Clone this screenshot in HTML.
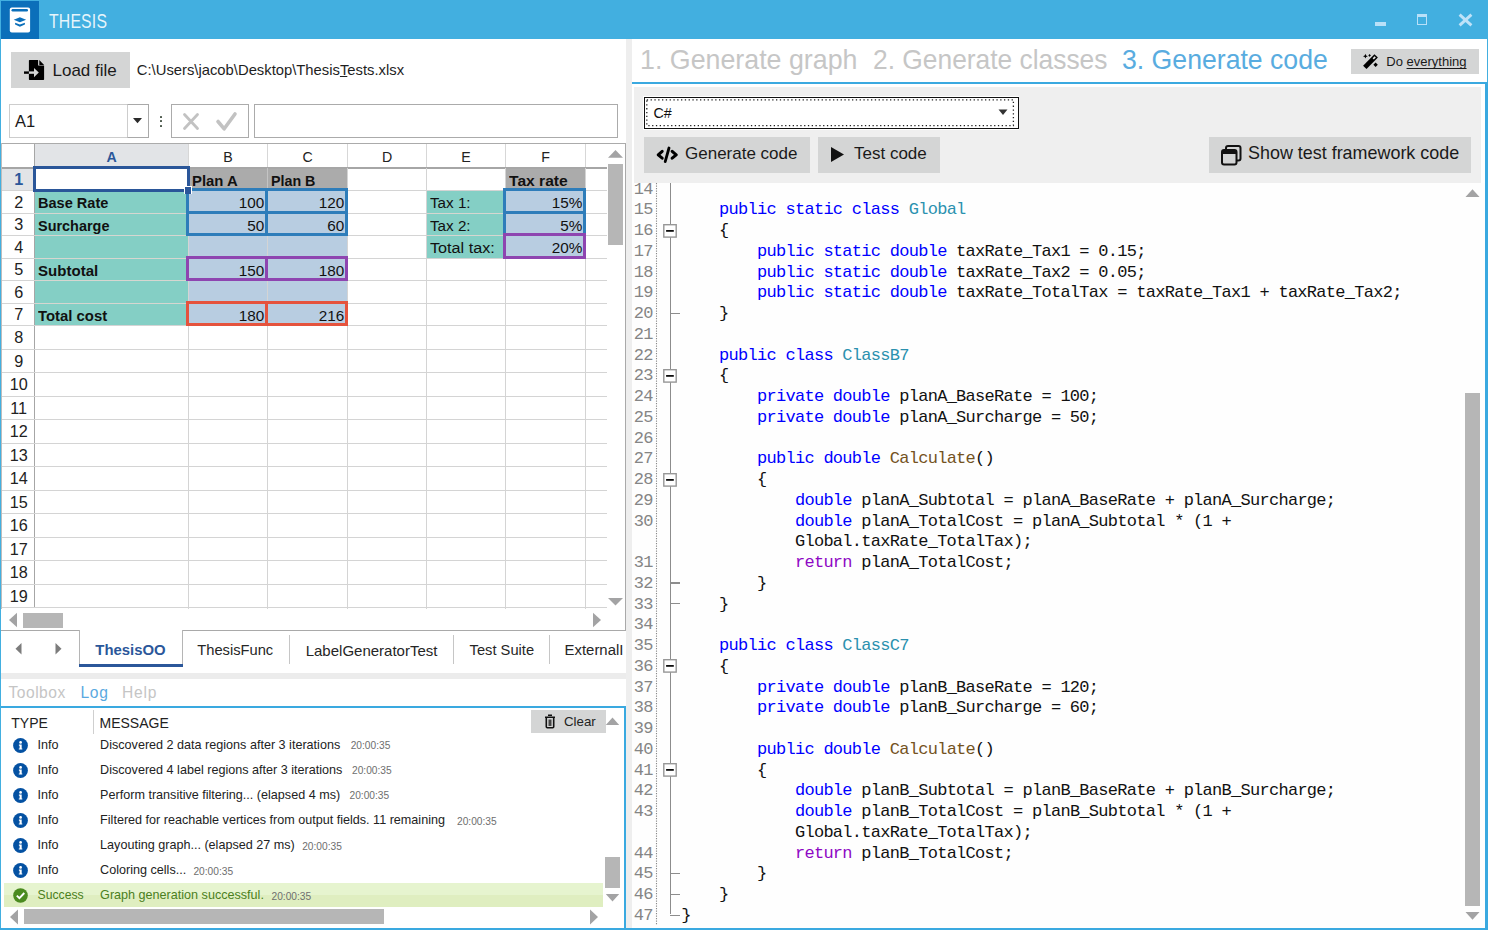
<!DOCTYPE html><html><head><meta charset="utf-8"><style>
*{margin:0;padding:0;box-sizing:content-box}
html,body{width:1488px;height:930px;overflow:hidden;background:#fff}
body{position:relative;font-family:"Liberation Sans", sans-serif}
body div, body svg{position:absolute}
.t{white-space:pre;line-height:1}
.code{font-family:"Liberation Mono", monospace;font-size:17px;letter-spacing:-0.722px;color:#111}
.ln{font-family:"Liberation Mono", monospace;font-size:17px;letter-spacing:-0.722px;color:#858585}
.k{color:#0000ff} .c{color:#2b91af} .m{color:#74531f} .r{color:#8f08c4}
u{text-decoration:underline}
</style></head><body><div style="left:0px;top:0px;width:1488px;height:39px;background:#42afe0"></div>
<div style="left:1px;top:1px;width:38px;height:37.5px;background:#0b6fba"></div>
<svg style="left:6px;top:4px" width="28" height="32" viewBox="0 0 28 32">
<rect x="3.8" y="3.6" width="20.3" height="25" rx="2" fill="#fff"/>
<rect x="5.5" y="5" width="16.5" height="2.4" rx="1.2" fill="#0b6fba"/>
<path d="M7.7 15.7 L13.9 13.2 L20.1 15.7 L13.9 18.2 Z" fill="#0b6fba"/>
<path d="M9.1 18.8 L13.9 20.4 L18.9 18.8 V20.6 L13.9 22.7 L9.1 20.6 Z" fill="#0b6fba"/>
</svg>
<div class="t" style="left:49.00px;top:11.86px;font-size:19.3px;color:rgba(255,255,255,0.88);transform:scaleX(0.82);transform-origin:0 0;letter-spacing:0.2px">THESIS</div>
<div style="left:1375px;top:22px;width:11px;height:4px;background:#b9e0f8"></div>
<div style="left:1417px;top:14px;width:8.2px;height:6.8px;border:1.4px solid #b9e0f8;border-top-width:3.6px"></div>
<svg style="left:1458px;top:13px" width="15" height="14" viewBox="0 0 15 14"><path d="M1.6 1.6 L13.4 12.4 M13.4 1.6 L1.6 12.4" stroke="#bfe2f8" stroke-width="2.9"/></svg>
<div style="left:0px;top:39px;width:1px;height:891px;background:#42afe0"></div>
<div style="left:1487px;top:39px;width:1px;height:891px;background:#42afe0"></div>
<div style="left:11px;top:52px;width:119px;height:36px;background:#d4d5d5"></div>
<svg style="left:20px;top:56px" width="30" height="28" viewBox="0 0 30 28">
<path d="M9.6 3.9 H18.1 V9.6 H24.1 V23.3 a0.7 0.7 0 0 1 -0.7 0.7 H9.6 a0.7 0.7 0 0 1 -0.7 -0.7 V4.6 a0.7 0.7 0 0 1 0.7 -0.7 Z" fill="#000"/>
<path d="M19.3 3.9 V8.9 H24.1 Z" fill="#000"/>
<path d="M4 16.6 H9" stroke="#000" stroke-width="2.4"/>
<path d="M8.9 16.6 H15" stroke="#d4d5d5" stroke-width="2.4"/>
<path d="M14 12 L18.8 16.6 L14 21.2 Z" fill="#d4d5d5"/>
</svg>
<div class="t" style="left:52.50px;top:61.61px;font-size:17.0px;color:#1a1a1a">Load file</div>
<div class="t" style="left:136.8px;top:62.77px;font-size:14.8px;color:#1e1e1e">C:\Users\jacob\Desktop\Thesis<u style="text-decoration-thickness:1px;text-underline-offset:1px">T</u>ests.xlsx</div>
<div style="left:9px;top:104px;width:118px;height:32px;border:1px solid #cdcdcd;border-right:0;background:#fff"></div>
<div style="left:127px;top:104px;width:20px;height:32px;border:1px solid #a9a9a9;border-left-color:#cdcdcd;background:#fff"></div>
<div class="t" style="left:15.00px;top:113.33px;font-size:16.5px;color:#1a1a1a">A1</div>
<svg style="left:133px;top:118px" width="9" height="6" viewBox="0 0 9 6"><path d="M0 0 H9 L4.5 5.3 Z" fill="#2a2a2a"/></svg>
<div style="left:160px;top:116.0px;width:2px;height:2px;background:#4d5a4d;border-radius:0.5px"></div>
<div style="left:160px;top:120.4px;width:2px;height:2px;background:#4d5a4d;border-radius:0.5px"></div>
<div style="left:160px;top:124.7px;width:2px;height:2px;background:#4d5a4d;border-radius:0.5px"></div>
<div style="left:171px;top:104px;width:76px;height:32px;border:1px solid #ababab;background:#fff"></div>
<svg style="left:180px;top:110px" width="60" height="24" viewBox="0 0 60 24">
<path d="M4.5 4.5 L17.5 18.5 M17.5 4.5 L4.5 18.5" stroke="#c2c2c2" stroke-width="2.8" stroke-linecap="round"/>
<path d="M38 11.5 L44.2 18.8 L55 4" stroke="#c2c2c2" stroke-width="3.6" fill="none" stroke-linejoin="round" stroke-linecap="round"/>
</svg>
<div style="left:254px;top:104px;width:362px;height:32px;border:1px solid #ababab;background:#fff"></div>
<div style="left:1.5px;top:143.5px;width:605px;height:24.5px;background:#fff"></div>
<div style="left:34.5px;top:144px;width:154.0px;height:24px;background:#e2e4e7"></div>
<div style="left:1.5px;top:168px;width:33px;height:22.5px;background:#e2e4e7"></div>
<div style="left:188.5px;top:168px;width:159.0px;height:22.5px;background:#ababab"></div>
<div style="left:505.5px;top:168px;width:80.0px;height:22.5px;background:#ababab"></div>
<div style="left:34.5px;top:190.5px;width:154.0px;height:135.0px;background:#84cfc5"></div>
<div style="left:188.5px;top:190.5px;width:159.0px;height:135.0px;background:#b8cde1"></div>
<div style="left:426.5px;top:190.5px;width:79.0px;height:68.0px;background:#84cfc5"></div>
<div style="left:505.5px;top:190.5px;width:80.0px;height:68.0px;background:#b8cde1"></div>
<div style="left:1.5px;top:143px;width:624.5px;height:1px;background:#ababab"></div>
<div style="left:34.0px;top:144px;width:1px;height:24px;background:#d7d7d7"></div>
<div style="left:188.0px;top:144px;width:1px;height:24px;background:#d7d7d7"></div>
<div style="left:267.0px;top:144px;width:1px;height:24px;background:#d7d7d7"></div>
<div style="left:347.0px;top:144px;width:1px;height:24px;background:#d7d7d7"></div>
<div style="left:426.0px;top:144px;width:1px;height:24px;background:#d7d7d7"></div>
<div style="left:505.0px;top:144px;width:1px;height:24px;background:#d7d7d7"></div>
<div style="left:585.0px;top:144px;width:1px;height:24px;background:#d7d7d7"></div>
<div style="left:1.5px;top:167px;width:606px;height:1.6px;background:#a6a6a6"></div>
<div style="left:34px;top:144px;width:1.2px;height:464px;background:#a6a6a6"></div>
<div style="left:1.5px;top:190.0px;width:605px;height:1px;background:#d4d4d4"></div>
<div style="left:1.5px;top:213.0px;width:605px;height:1px;background:#d4d4d4"></div>
<div style="left:1.5px;top:235.0px;width:605px;height:1px;background:#d4d4d4"></div>
<div style="left:1.5px;top:258.0px;width:605px;height:1px;background:#d4d4d4"></div>
<div style="left:1.5px;top:280.0px;width:605px;height:1px;background:#d4d4d4"></div>
<div style="left:1.5px;top:303.0px;width:605px;height:1px;background:#d4d4d4"></div>
<div style="left:1.5px;top:325.0px;width:605px;height:1px;background:#d4d4d4"></div>
<div style="left:1.5px;top:349.0px;width:605px;height:1px;background:#d4d4d4"></div>
<div style="left:1.5px;top:372.0px;width:605px;height:1px;background:#d4d4d4"></div>
<div style="left:1.5px;top:396.0px;width:605px;height:1px;background:#d4d4d4"></div>
<div style="left:1.5px;top:419.0px;width:605px;height:1px;background:#d4d4d4"></div>
<div style="left:1.5px;top:443.0px;width:605px;height:1px;background:#d4d4d4"></div>
<div style="left:1.5px;top:466.0px;width:605px;height:1px;background:#d4d4d4"></div>
<div style="left:1.5px;top:490.0px;width:605px;height:1px;background:#d4d4d4"></div>
<div style="left:1.5px;top:513.0px;width:605px;height:1px;background:#d4d4d4"></div>
<div style="left:1.5px;top:537.0px;width:605px;height:1px;background:#d4d4d4"></div>
<div style="left:1.5px;top:560.0px;width:605px;height:1px;background:#d4d4d4"></div>
<div style="left:1.5px;top:584.0px;width:605px;height:1px;background:#d4d4d4"></div>
<div style="left:1.5px;top:607.0px;width:605px;height:1px;background:#d4d4d4"></div>
<div style="left:188.0px;top:168px;width:1px;height:441px;background:#d4d4d4"></div>
<div style="left:267.0px;top:168px;width:1px;height:441px;background:#d4d4d4"></div>
<div style="left:347.0px;top:168px;width:1px;height:441px;background:#d4d4d4"></div>
<div style="left:426.0px;top:168px;width:1px;height:441px;background:#d4d4d4"></div>
<div style="left:505.0px;top:168px;width:1px;height:441px;background:#d4d4d4"></div>
<div style="left:585.0px;top:168px;width:1px;height:441px;background:#d4d4d4"></div>
<div style="left:34.5px;top:213.0px;width:154.0px;height:1px;background:#d6d6d0"></div>
<div style="left:34.5px;top:235.0px;width:154.0px;height:1px;background:#d6d6d0"></div>
<div style="left:34.5px;top:258.0px;width:154.0px;height:1px;background:#d6d6d0"></div>
<div style="left:34.5px;top:280.0px;width:154.0px;height:1px;background:#d6d6d0"></div>
<div style="left:34.5px;top:303.0px;width:154.0px;height:1px;background:#d6d6d0"></div>
<div style="left:188.5px;top:213.0px;width:159.0px;height:1px;background:#d2d8de"></div>
<div style="left:188.5px;top:235.0px;width:159.0px;height:1px;background:#d2d8de"></div>
<div style="left:188.5px;top:258.0px;width:159.0px;height:1px;background:#d2d8de"></div>
<div style="left:188.5px;top:280.0px;width:159.0px;height:1px;background:#d2d8de"></div>
<div style="left:188.5px;top:303.0px;width:159.0px;height:1px;background:#d2d8de"></div>
<div style="left:426.5px;top:213.0px;width:79.0px;height:1px;background:#d6d6d0"></div>
<div style="left:426.5px;top:235.0px;width:79.0px;height:1px;background:#d6d6d0"></div>
<div style="left:267.0px;top:168px;width:1px;height:22.5px;background:#c4c4c4"></div>
<div style="left:1px;top:143px;width:1px;height:466px;background:#bdbdbd"></div>
<div class="t" style="left:-188.50px;width:600px;text-align:center;top:149.58px;font-size:14.2px;color:#2b579a;font-weight:bold">A</div>
<div class="t" style="left:-72.00px;width:600px;text-align:center;top:149.58px;font-size:14.2px;color:#222">B</div>
<div class="t" style="left:7.50px;width:600px;text-align:center;top:149.58px;font-size:14.2px;color:#222">C</div>
<div class="t" style="left:87.00px;width:600px;text-align:center;top:149.58px;font-size:14.2px;color:#222">D</div>
<div class="t" style="left:166.00px;width:600px;text-align:center;top:149.58px;font-size:14.2px;color:#222">E</div>
<div class="t" style="left:245.50px;width:600px;text-align:center;top:149.58px;font-size:14.2px;color:#222">F</div>
<div class="t" style="left:-281.30px;width:600px;text-align:center;top:170.84px;font-size:16.2px;color:#2b579a;font-weight:bold">1</div>
<div class="t" style="left:-281.30px;width:600px;text-align:center;top:193.59px;font-size:16.2px;color:#222">2</div>
<div class="t" style="left:-281.30px;width:600px;text-align:center;top:216.09px;font-size:16.2px;color:#222">3</div>
<div class="t" style="left:-281.30px;width:600px;text-align:center;top:238.59px;font-size:16.2px;color:#222">4</div>
<div class="t" style="left:-281.30px;width:600px;text-align:center;top:261.09px;font-size:16.2px;color:#222">5</div>
<div class="t" style="left:-281.30px;width:600px;text-align:center;top:283.59px;font-size:16.2px;color:#222">6</div>
<div class="t" style="left:-281.30px;width:600px;text-align:center;top:306.09px;font-size:16.2px;color:#222">7</div>
<div class="t" style="left:-281.30px;width:600px;text-align:center;top:329.09px;font-size:16.2px;color:#222">8</div>
<div class="t" style="left:-281.30px;width:600px;text-align:center;top:352.59px;font-size:16.2px;color:#222">9</div>
<div class="t" style="left:-281.30px;width:600px;text-align:center;top:376.09px;font-size:16.2px;color:#222">10</div>
<div class="t" style="left:-281.30px;width:600px;text-align:center;top:399.59px;font-size:16.2px;color:#222">11</div>
<div class="t" style="left:-281.30px;width:600px;text-align:center;top:423.09px;font-size:16.2px;color:#222">12</div>
<div class="t" style="left:-281.30px;width:600px;text-align:center;top:446.59px;font-size:16.2px;color:#222">13</div>
<div class="t" style="left:-281.30px;width:600px;text-align:center;top:470.09px;font-size:16.2px;color:#222">14</div>
<div class="t" style="left:-281.30px;width:600px;text-align:center;top:493.59px;font-size:16.2px;color:#222">15</div>
<div class="t" style="left:-281.30px;width:600px;text-align:center;top:517.09px;font-size:16.2px;color:#222">16</div>
<div class="t" style="left:-281.30px;width:600px;text-align:center;top:540.59px;font-size:16.2px;color:#222">17</div>
<div class="t" style="left:-281.30px;width:600px;text-align:center;top:564.09px;font-size:16.2px;color:#222">18</div>
<div class="t" style="left:-281.30px;width:600px;text-align:center;top:587.59px;font-size:16.2px;color:#222">19</div>
<div class="t" style="left:191.90px;top:172.55px;font-size:15px;color:#111;font-weight:bold;transform:scaleX(0.9908);transform-origin:0 0;">Plan A</div>
<div class="t" style="left:270.90px;top:172.55px;font-size:15px;color:#111;font-weight:bold;transform:scaleX(0.9518);transform-origin:0 0;">Plan B</div>
<div class="t" style="left:508.90px;top:172.55px;font-size:15px;color:#111;font-weight:bold;transform:scaleX(1.0408);transform-origin:0 0;">Tax rate</div>
<div class="t" style="left:37.90px;top:195.30px;font-size:15px;color:#111;font-weight:bold;transform:scaleX(0.9693);transform-origin:0 0;">Base Rate</div>
<div class="t" style="left:37.90px;top:217.80px;font-size:15px;color:#111;font-weight:bold;transform:scaleX(0.9626);transform-origin:0 0;">Surcharge</div>
<div class="t" style="left:37.90px;top:262.80px;font-size:15px;color:#111;font-weight:bold;transform:scaleX(1.0033);transform-origin:0 0;">Subtotal</div>
<div class="t" style="left:37.90px;top:307.80px;font-size:15px;color:#111;font-weight:bold;transform:scaleX(0.9921);transform-origin:0 0;">Total cost</div>
<div class="t" style="right:1223.70px;top:195.05px;font-size:15.3px;color:#111;">100</div>
<div class="t" style="right:1143.70px;top:195.05px;font-size:15.3px;color:#111;">120</div>
<div class="t" style="right:1223.70px;top:217.55px;font-size:15.3px;color:#111;">50</div>
<div class="t" style="right:1143.70px;top:217.55px;font-size:15.3px;color:#111;">60</div>
<div class="t" style="right:1223.70px;top:262.55px;font-size:15.3px;color:#111;">150</div>
<div class="t" style="right:1143.70px;top:262.55px;font-size:15.3px;color:#111;">180</div>
<div class="t" style="right:1223.70px;top:307.55px;font-size:15.3px;color:#111;">180</div>
<div class="t" style="right:1143.70px;top:307.55px;font-size:15.3px;color:#111;">216</div>
<div class="t" style="right:905.70px;top:195.05px;font-size:15.3px;color:#111;">15%</div>
<div class="t" style="right:905.70px;top:217.55px;font-size:15.3px;color:#111;">5%</div>
<div class="t" style="right:905.70px;top:240.05px;font-size:15.3px;color:#111;">20%</div>
<div class="t" style="left:429.90px;top:195.05px;font-size:15.3px;color:#111;transform:scaleX(0.9939);transform-origin:0 0;">Tax 1:</div>
<div class="t" style="left:429.90px;top:217.55px;font-size:15.3px;color:#111;transform:scaleX(0.9939);transform-origin:0 0;">Tax 2:</div>
<div class="t" style="left:429.90px;top:240.05px;font-size:15.3px;color:#111;transform:scaleX(1.0588);transform-origin:0 0;">Total tax:</div>
<div style="left:186.10px;top:187.80px;width:76.40px;height:20.70px;border:3px solid #2e7dba"></div>
<div style="left:186.10px;top:210.80px;width:76.40px;height:19.70px;border:3px solid #2e7dba"></div>
<div style="left:265.10px;top:187.80px;width:77.40px;height:20.70px;border:3px solid #2e7dba"></div>
<div style="left:265.10px;top:210.80px;width:77.40px;height:19.70px;border:3px solid #2e7dba"></div>
<div style="left:503.10px;top:187.80px;width:77.40px;height:20.70px;border:3px solid #2e7dba"></div>
<div style="left:503.10px;top:210.80px;width:77.40px;height:19.70px;border:3px solid #2e7dba"></div>
<div style="left:186.10px;top:255.80px;width:76.40px;height:19.70px;border:3px solid #8e45b0"></div>
<div style="left:265.10px;top:255.80px;width:77.40px;height:19.70px;border:3px solid #8e45b0"></div>
<div style="left:503.10px;top:232.80px;width:77.40px;height:20.70px;border:3px solid #8e45b0"></div>
<div style="left:186.10px;top:300.80px;width:76.40px;height:19.70px;border:3px solid #e5533d"></div>
<div style="left:265.10px;top:300.80px;width:77.40px;height:19.70px;border:3px solid #e5533d"></div>
<div style="left:33px;top:166.3px;width:150.7px;height:19.5px;border:3px solid #2a5699"></div>
<div style="left:184.5px;top:186.5px;width:6.5px;height:6.5px;background:#2a5699;outline:1px solid #fff"></div>
<div style="left:185px;top:187.2px;width:6px;height:6.4px;background:#2a5699"></div>
<div style="left:607px;top:144px;width:18px;height:486px;background:#fff"></div>
<svg style="left:607px;top:149px" width="17" height="10" viewBox="0 0 17 10"><path d="M1 8.8 L8.5 1 L16 8.8 Z" fill="#a3a3a4"/></svg>
<div style="left:608px;top:164px;width:15px;height:80.8px;background:#b6b6b6"></div>
<svg style="left:607px;top:596.5px" width="17" height="10" viewBox="0 0 17 10"><path d="M1 1 L8.5 8.5 L16 1 Z" fill="#a3a3a4"/></svg>
<div style="left:625px;top:143.5px;width:1px;height:487px;background:#a9a9a9"></div>
<svg style="left:8px;top:612px" width="10" height="16" viewBox="0 0 10 16"><path d="M9 0.8 L1 8 L9 15.2 Z" fill="#a3a3a4"/></svg>
<div style="left:23px;top:612.8px;width:40px;height:14.8px;background:#b6b6b6"></div>
<svg style="left:591.8px;top:612px" width="10" height="16" viewBox="0 0 10 16"><path d="M1 0.8 L9 8 L1 15.2 Z" fill="#a3a3a4"/></svg>
<div style="left:1px;top:630px;width:79px;height:1px;background:#a9a9a9"></div>
<div style="left:182px;top:630px;width:443px;height:1px;background:#a9a9a9"></div>
<div style="left:79.3px;top:630px;width:1px;height:34px;background:#b5b5b5"></div>
<div style="left:182px;top:630px;width:1px;height:34px;background:#b5b5b5"></div>
<div style="left:79px;top:664px;width:104px;height:3px;background:#2b579a"></div>
<svg style="left:14px;top:642px" width="9" height="14" viewBox="0 0 9 14"><path d="M7.5 1 L1.5 6.8 L7.5 12.6 Z" fill="#7c7c7c"/></svg>
<svg style="left:54px;top:642px" width="9" height="14" viewBox="0 0 9 14"><path d="M1.5 1 L7.5 6.8 L1.5 12.6 Z" fill="#7c7c7c"/></svg>
<div class="t" style="left:95.30px;top:642.89px;font-size:14.9px;color:#2b579a;font-weight:bold">ThesisOO</div>
<div class="t" style="left:197.30px;top:643.06px;font-size:14.7px;color:#262626">ThesisFunc</div>
<div style="left:288.5px;top:635.3px;width:1.3px;height:28.3px;background:#c6c6c6"></div>
<div class="t" style="left:305.70px;top:642.80px;font-size:15.0px;color:#262626">LabelGeneratorTest</div>
<div style="left:453px;top:635.3px;width:1.3px;height:28.3px;background:#c6c6c6"></div>
<div class="t" style="left:469.60px;top:643.06px;font-size:14.7px;color:#262626">Test Suite</div>
<div style="left:549.2px;top:635.3px;width:1.3px;height:28.3px;background:#c6c6c6"></div>
<div style="left:564.6px;top:642.69px;width:59px;overflow:hidden;height:22px;font-size:14.9px;color:#262626" class="t">ExternalI</div>
<div style="left:1px;top:673px;width:625px;height:6px;background:#ececec"></div>
<div class="t" style="left:8.50px;top:684.79px;font-size:15.6px;color:#c5c5c5;letter-spacing:0.5px">Toolbox</div>
<div class="t" style="left:80.50px;top:684.79px;font-size:15.6px;color:#5aa9e0;letter-spacing:0.7px">Log</div>
<div class="t" style="left:122.00px;top:684.79px;font-size:15.6px;color:#c5c5c5;letter-spacing:0.8px">Help</div>
<div style="left:1px;top:706px;width:625px;height:2px;background:#3aa9e0"></div>
<div style="left:624px;top:706px;width:2px;height:224px;background:#3aa9e0"></div>
<div class="t" style="left:11.30px;top:716.35px;font-size:14.0px;color:#222">TYPE</div>
<div style="left:93px;top:710px;width:1px;height:24px;background:#cfcfcf"></div>
<div class="t" style="left:99.50px;top:716.35px;font-size:14.0px;color:#222">MESSAGE</div>
<div style="left:531px;top:710px;width:75px;height:23px;background:#d4d5d5"></div>
<svg style="left:544px;top:714px" width="12" height="15" viewBox="0 0 12 15">
<path d="M4 1.2 H8 M1 3.2 H11" stroke="#111" stroke-width="1.6"/>
<path d="M2.3 3.5 V12.8 a1 1 0 0 0 1 1 H8.7 a1 1 0 0 0 1 -1 V3.5" stroke="#111" stroke-width="1.6" fill="none"/>
<rect x="4.5" y="5.5" width="3" height="6.5" fill="#444"/>
</svg>
<div class="t" style="left:564.00px;top:714.64px;font-size:13.3px;color:#222">Clear</div>
<svg style="left:605px;top:716px" width="15" height="10" viewBox="0 0 15 10"><path d="M0.8 9 L7.5 1.5 L14.2 9 Z" fill="#a3a3a4"/></svg>
<div style="left:4.2px;top:883px;width:599px;height:12px;background:#e6f4cf"></div>
<div style="left:4.2px;top:895px;width:599px;height:12px;background:#dfeec0"></div>
<svg style="left:12.90px;top:737.90px" width="15" height="15" viewBox="0 0 15 15"><circle cx="7.5" cy="7.5" r="7.4" fill="#0451a2"/><circle cx="7.6" cy="4.4" r="1.35" fill="#fff"/><path d="M5.9 6.6 H8.7 V10.4 H9.3 V11.6 H5.8 V10.4 H6.6 V7.8 H5.9 Z" fill="#fff"/></svg>
<div class="t" style="left:37.60px;top:738.83px;font-size:12.6px;color:#222">Info</div>
<div class="t" style="left:100.10px;top:738.83px;font-size:12.6px;color:#222">Discovered 2 data regions after 3 iterations</div>
<div class="t" style="left:350.70px;top:741.37px;font-size:10.2px;color:#6e6e6e">20:00:35</div>
<svg style="left:12.90px;top:762.95px" width="15" height="15" viewBox="0 0 15 15"><circle cx="7.5" cy="7.5" r="7.4" fill="#0451a2"/><circle cx="7.6" cy="4.4" r="1.35" fill="#fff"/><path d="M5.9 6.6 H8.7 V10.4 H9.3 V11.6 H5.8 V10.4 H6.6 V7.8 H5.9 Z" fill="#fff"/></svg>
<div class="t" style="left:37.60px;top:763.88px;font-size:12.6px;color:#222">Info</div>
<div class="t" style="left:100.10px;top:763.88px;font-size:12.6px;color:#222">Discovered 4 label regions after 3 iterations</div>
<div class="t" style="left:352.00px;top:766.42px;font-size:10.2px;color:#6e6e6e">20:00:35</div>
<svg style="left:12.90px;top:788.00px" width="15" height="15" viewBox="0 0 15 15"><circle cx="7.5" cy="7.5" r="7.4" fill="#0451a2"/><circle cx="7.6" cy="4.4" r="1.35" fill="#fff"/><path d="M5.9 6.6 H8.7 V10.4 H9.3 V11.6 H5.8 V10.4 H6.6 V7.8 H5.9 Z" fill="#fff"/></svg>
<div class="t" style="left:37.60px;top:788.93px;font-size:12.6px;color:#222">Info</div>
<div class="t" style="left:100.10px;top:788.93px;font-size:12.6px;color:#222">Perform transitive filtering... (elapsed 4 ms)</div>
<div class="t" style="left:349.50px;top:791.47px;font-size:10.2px;color:#6e6e6e">20:00:35</div>
<svg style="left:12.90px;top:813.05px" width="15" height="15" viewBox="0 0 15 15"><circle cx="7.5" cy="7.5" r="7.4" fill="#0451a2"/><circle cx="7.6" cy="4.4" r="1.35" fill="#fff"/><path d="M5.9 6.6 H8.7 V10.4 H9.3 V11.6 H5.8 V10.4 H6.6 V7.8 H5.9 Z" fill="#fff"/></svg>
<div class="t" style="left:37.60px;top:813.98px;font-size:12.6px;color:#222">Info</div>
<div class="t" style="left:100.10px;top:813.98px;font-size:12.6px;color:#222">Filtered for reachable vertices from output fields. 11 remaining</div>
<div class="t" style="left:457.00px;top:816.52px;font-size:10.2px;color:#6e6e6e">20:00:35</div>
<svg style="left:12.90px;top:838.10px" width="15" height="15" viewBox="0 0 15 15"><circle cx="7.5" cy="7.5" r="7.4" fill="#0451a2"/><circle cx="7.6" cy="4.4" r="1.35" fill="#fff"/><path d="M5.9 6.6 H8.7 V10.4 H9.3 V11.6 H5.8 V10.4 H6.6 V7.8 H5.9 Z" fill="#fff"/></svg>
<div class="t" style="left:37.60px;top:839.03px;font-size:12.6px;color:#222">Info</div>
<div class="t" style="left:100.10px;top:839.03px;font-size:12.6px;color:#222">Layouting graph... (elapsed 27 ms)</div>
<div class="t" style="left:302.20px;top:841.57px;font-size:10.2px;color:#6e6e6e">20:00:35</div>
<svg style="left:12.90px;top:863.15px" width="15" height="15" viewBox="0 0 15 15"><circle cx="7.5" cy="7.5" r="7.4" fill="#0451a2"/><circle cx="7.6" cy="4.4" r="1.35" fill="#fff"/><path d="M5.9 6.6 H8.7 V10.4 H9.3 V11.6 H5.8 V10.4 H6.6 V7.8 H5.9 Z" fill="#fff"/></svg>
<div class="t" style="left:37.60px;top:864.08px;font-size:12.6px;color:#222">Info</div>
<div class="t" style="left:100.10px;top:864.08px;font-size:12.6px;color:#222">Coloring cells...</div>
<div class="t" style="left:193.40px;top:866.62px;font-size:10.2px;color:#6e6e6e">20:00:35</div>
<svg style="left:13.00px;top:888.20px" width="15" height="15" viewBox="0 0 15 15"><circle cx="7.5" cy="7.5" r="7.3" fill="#4b8b1f"/><path d="M3.8 7.6 L6.4 10.2 L11.3 5" stroke="#fff" stroke-width="1.9" fill="none"/></svg>
<div class="t" style="left:37.60px;top:889.47px;font-size:12.2px;color:#4b7f20">Success</div>
<div class="t" style="left:100.10px;top:889.13px;font-size:12.6px;color:#4b7f20">Graph generation successful.</div>
<div class="t" style="left:271.50px;top:891.67px;font-size:10.2px;color:#6e6e6e">20:00:35</div>
<div style="left:605px;top:857px;width:15px;height:31px;background:#b6b6b6"></div>
<svg style="left:605px;top:893px" width="15" height="10" viewBox="0 0 15 10"><path d="M0.8 1 L7.5 8.5 L14.2 1 Z" fill="#a3a3a4"/></svg>
<svg style="left:9px;top:909px" width="10" height="16" viewBox="0 0 10 16"><path d="M9 0.5 L1 8 L9 15.5 Z" fill="#a3a3a4"/></svg>
<div style="left:24px;top:909px;width:360px;height:15px;background:#b6b6b6"></div>
<svg style="left:589px;top:909px" width="10" height="16" viewBox="0 0 10 16"><path d="M1 0.5 L9 8 L1 15.5 Z" fill="#a3a3a4"/></svg>
<div style="left:626px;top:39px;width:6px;height:891px;background:#eeeeee"></div>
<div class="t" style="left:640.40px;top:46.38px;font-size:27.2px;color:#c6c6c6;transform:scaleX(0.9855);transform-origin:0 0">1. Generate graph</div>
<div class="t" style="left:873.30px;top:46.38px;font-size:27.2px;color:#c6c6c6;transform:scaleX(0.9697);transform-origin:0 0">2. Generate classes</div>
<div class="t" style="left:1122.10px;top:46.38px;font-size:27.2px;color:#59ace0;transform:scaleX(0.9796);transform-origin:0 0">3. Generate code</div>
<div style="left:1351px;top:49px;width:128px;height:25px;background:#d4d5d5"></div>
<svg style="left:1356px;top:48px" width="30" height="26" viewBox="0 0 30 26">
<path d="M7.1 17.8 L18.4 6.3 L21.9 9.6 L10.5 21 Z" fill="#000"/>
<path d="M16.6 10.3 L18.6 8.2 L19.8 9.4 L17.8 11.5 Z" fill="#e8e8e8"/>
<path d="M9.4 5.8 Q9.6 8 11.8 8.2 Q9.6 8.4 9.4 10.6 Q9.2 8.4 7 8.2 Q9.2 8 9.4 5.8 Z" fill="#000"/>
<path d="M13.6 6.1 L14.9 7.4 L13.6 8.7 L12.3 7.4 Z" fill="#000"/>
<path d="M19.6 14.6 L21.8 16.8 L19.6 19 L17.4 16.8 Z" fill="#000"/>
</svg>
<div class="t" style="left:1386.3px;top:55.30px;font-size:13px;color:#1a1a1a">Do <u style="text-decoration-thickness:1px;text-underline-offset:1.5px">everything</u></div>
<div style="left:632px;top:82px;width:856px;height:2px;background:#3aa9e0"></div>
<div style="left:1485px;top:84px;width:3px;height:846px;background:#3aa9e0"></div>
<div style="left:0px;top:928px;width:1488px;height:2px;background:#3aa9e0"></div>
<div style="left:633.5px;top:86.8px;width:847.5px;height:95.9px;background:#efefef"></div>
<div style="left:643px;top:96px;width:374px;height:31.5px;border:1px solid #fff"></div>
<div style="left:644px;top:97px;width:372.5px;height:30px;border:1.5px solid #111;background:#fff"></div>
<svg style="left:646px;top:99px" width="370" height="28" viewBox="0 0 370 28"><rect x="0.8" y="0.8" width="366.6" height="25.8" fill="none" stroke="#222" stroke-width="1.3" stroke-dasharray="1.3 2.5"/></svg>
<div class="t" style="left:653.50px;top:105.70px;font-size:14.3px;color:#111">C#</div>
<svg style="left:998px;top:109px" width="10" height="7" viewBox="0 0 10 7"><path d="M0.5 0.5 H9.5 L5 6 Z" fill="#333"/></svg>
<div style="left:644px;top:137px;width:165.6px;height:35.7px;background:#d4d5d5"></div>
<svg style="left:656px;top:145px" width="22" height="20" viewBox="0 0 22 20">
<path d="M6.2 6.3 L2.2 9.9 L6.2 13.2" stroke="#000" stroke-width="3" fill="none" stroke-linecap="round" stroke-linejoin="round"/>
<path d="M16.2 6.3 L20.2 9.9 L16.2 13.2" stroke="#000" stroke-width="3" fill="none" stroke-linecap="round" stroke-linejoin="round"/>
<path d="M13 3 L9.2 16.6" stroke="#000" stroke-width="2.8" stroke-linecap="round"/>
</svg>
<div class="t" style="left:685.00px;top:145.41px;font-size:17.0px;color:#1a1a1a">Generate code</div>
<div style="left:818px;top:137px;width:121.8px;height:35.7px;background:#d4d5d5"></div>
<svg style="left:830px;top:146px" width="15" height="17" viewBox="0 0 15 17"><path d="M1 1 L14 8.5 L1 16 Z" fill="#111"/></svg>
<div class="t" style="left:854.00px;top:145.41px;font-size:17.0px;color:#1a1a1a">Test code</div>
<div style="left:1209px;top:137px;width:262px;height:35.6px;background:#d4d5d5"></div>
<svg style="left:1220px;top:144px" width="22" height="22" viewBox="0 0 22 22">
<rect x="6" y="2" width="14.5" height="14.5" rx="2" fill="none" stroke="#111" stroke-width="2"/>
<rect x="2" y="6" width="14.5" height="14.5" rx="2" fill="#d4d5d5" stroke="#111" stroke-width="2"/>
<rect x="2" y="6" width="14.5" height="4" fill="#111"/>
</svg>
<div class="t" style="left:1248.00px;top:144.82px;font-size:17.93px;color:#1a1a1a">Show test framework code</div>
<div style="left:632px;top:182.6px;width:853px;height:745.4px;background:#fefefe"></div>
<svg style="left:655px;top:183px" width="3" height="742" viewBox="0 0 3 742"><path d="M1.5 0 V742" stroke="#8a8a8a" stroke-width="1.1" stroke-dasharray="1.2 1.3"/></svg>
<svg style="left:1465px;top:188px" width="15" height="10" viewBox="0 0 15 10"><path d="M0.5 9 L7.5 1.2 L14.5 9 Z" fill="#a3a3a4"/></svg>
<div style="left:1465.1px;top:393.1px;width:14.8px;height:512.7px;background:#b6b6b6"></div>
<svg style="left:1465px;top:911px" width="15" height="10" viewBox="0 0 15 10"><path d="M0.5 1 L7.5 8.8 L14.5 1 Z" fill="#a3a3a4"/></svg>
<div style="left:632px;top:182.6px;width:853px;height:745.4px;overflow:hidden">
<div class="t ln" style="right:832.20px;top:-2.08px">14</div>
<div class="t ln" style="right:832.20px;top:18.68px">15</div>
<div class="t code" style="left:49.20px;top:18.68px">    <span class="k">public static class</span> <span class="c">Global</span></div>
<div class="t ln" style="right:832.20px;top:39.43px">16</div>
<div class="t code" style="left:49.20px;top:39.43px">    {</div>
<div class="t ln" style="right:832.20px;top:60.19px">17</div>
<div class="t code" style="left:49.20px;top:60.19px">        <span class="k">public static double</span> taxRate_Tax1 = 0.15;</div>
<div class="t ln" style="right:832.20px;top:80.94px">18</div>
<div class="t code" style="left:49.20px;top:80.94px">        <span class="k">public static double</span> taxRate_Tax2 = 0.05;</div>
<div class="t ln" style="right:832.20px;top:101.70px">19</div>
<div class="t code" style="left:49.20px;top:101.70px">        <span class="k">public static double</span> taxRate_TotalTax = taxRate_Tax1 + taxRate_Tax2;</div>
<div class="t ln" style="right:832.20px;top:122.46px">20</div>
<div class="t code" style="left:49.20px;top:122.46px">    }</div>
<div class="t ln" style="right:832.20px;top:143.21px">21</div>
<div class="t ln" style="right:832.20px;top:163.97px">22</div>
<div class="t code" style="left:49.20px;top:163.97px">    <span class="k">public class</span> <span class="c">ClassB7</span></div>
<div class="t ln" style="right:832.20px;top:184.72px">23</div>
<div class="t code" style="left:49.20px;top:184.72px">    {</div>
<div class="t ln" style="right:832.20px;top:205.48px">24</div>
<div class="t code" style="left:49.20px;top:205.48px">        <span class="k">private double</span> planA_BaseRate = 100;</div>
<div class="t ln" style="right:832.20px;top:226.24px">25</div>
<div class="t code" style="left:49.20px;top:226.24px">        <span class="k">private double</span> planA_Surcharge = 50;</div>
<div class="t ln" style="right:832.20px;top:246.99px">26</div>
<div class="t ln" style="right:832.20px;top:267.75px">27</div>
<div class="t code" style="left:49.20px;top:267.75px">        <span class="k">public double</span> <span class="m">Calculate</span>()</div>
<div class="t ln" style="right:832.20px;top:288.50px">28</div>
<div class="t code" style="left:49.20px;top:288.50px">        {</div>
<div class="t ln" style="right:832.20px;top:309.26px">29</div>
<div class="t code" style="left:49.20px;top:309.26px">            <span class="k">double</span> planA_Subtotal = planA_BaseRate + planA_Surcharge;</div>
<div class="t ln" style="right:832.20px;top:330.02px">30</div>
<div class="t code" style="left:49.20px;top:330.02px">            <span class="k">double</span> planA_TotalCost = planA_Subtotal * (1 +</div>
<div class="t code" style="left:49.20px;top:350.77px">            Global.taxRate_TotalTax);</div>
<div class="t ln" style="right:832.20px;top:371.53px">31</div>
<div class="t code" style="left:49.20px;top:371.53px">            <span class="r">return</span> planA_TotalCost;</div>
<div class="t ln" style="right:832.20px;top:392.28px">32</div>
<div class="t code" style="left:49.20px;top:392.28px">        }</div>
<div class="t ln" style="right:832.20px;top:413.04px">33</div>
<div class="t code" style="left:49.20px;top:413.04px">    }</div>
<div class="t ln" style="right:832.20px;top:433.80px">34</div>
<div class="t ln" style="right:832.20px;top:454.55px">35</div>
<div class="t code" style="left:49.20px;top:454.55px">    <span class="k">public class</span> <span class="c">ClassC7</span></div>
<div class="t ln" style="right:832.20px;top:475.31px">36</div>
<div class="t code" style="left:49.20px;top:475.31px">    {</div>
<div class="t ln" style="right:832.20px;top:496.06px">37</div>
<div class="t code" style="left:49.20px;top:496.06px">        <span class="k">private double</span> planB_BaseRate = 120;</div>
<div class="t ln" style="right:832.20px;top:516.82px">38</div>
<div class="t code" style="left:49.20px;top:516.82px">        <span class="k">private double</span> planB_Surcharge = 60;</div>
<div class="t ln" style="right:832.20px;top:537.58px">39</div>
<div class="t ln" style="right:832.20px;top:558.33px">40</div>
<div class="t code" style="left:49.20px;top:558.33px">        <span class="k">public double</span> <span class="m">Calculate</span>()</div>
<div class="t ln" style="right:832.20px;top:579.09px">41</div>
<div class="t code" style="left:49.20px;top:579.09px">        {</div>
<div class="t ln" style="right:832.20px;top:599.84px">42</div>
<div class="t code" style="left:49.20px;top:599.84px">            <span class="k">double</span> planB_Subtotal = planB_BaseRate + planB_Surcharge;</div>
<div class="t ln" style="right:832.20px;top:620.60px">43</div>
<div class="t code" style="left:49.20px;top:620.60px">            <span class="k">double</span> planB_TotalCost = planB_Subtotal * (1 +</div>
<div class="t code" style="left:49.20px;top:641.36px">            Global.taxRate_TotalTax);</div>
<div class="t ln" style="right:832.20px;top:662.11px">44</div>
<div class="t code" style="left:49.20px;top:662.11px">            <span class="r">return</span> planB_TotalCost;</div>
<div class="t ln" style="right:832.20px;top:682.87px">45</div>
<div class="t code" style="left:49.20px;top:682.87px">        }</div>
<div class="t ln" style="right:832.20px;top:703.62px">46</div>
<div class="t code" style="left:49.20px;top:703.62px">    }</div>
<div class="t ln" style="right:832.20px;top:724.38px">47</div>
<div class="t code" style="left:49.20px;top:724.38px">}</div>
</div>
<div style="left:670.2px;top:182.6px;width:1.2px;height:731.41px;background:#8c8c8c"></div>
<svg style="left:662px;top:222.56px" width="16" height="16" viewBox="0 0 16 16"><rect x="1.8" y="1.7" width="12.4" height="12.4" fill="#fff" stroke="#979797" stroke-width="1.4"/><path d="M4.1 7.9 H11.8" stroke="#000" stroke-width="1.7"/></svg>
<svg style="left:662px;top:367.85px" width="16" height="16" viewBox="0 0 16 16"><rect x="1.8" y="1.7" width="12.4" height="12.4" fill="#fff" stroke="#979797" stroke-width="1.4"/><path d="M4.1 7.9 H11.8" stroke="#000" stroke-width="1.7"/></svg>
<svg style="left:662px;top:471.63px" width="16" height="16" viewBox="0 0 16 16"><rect x="1.8" y="1.7" width="12.4" height="12.4" fill="#fff" stroke="#979797" stroke-width="1.4"/><path d="M4.1 7.9 H11.8" stroke="#000" stroke-width="1.7"/></svg>
<svg style="left:662px;top:658.44px" width="16" height="16" viewBox="0 0 16 16"><rect x="1.8" y="1.7" width="12.4" height="12.4" fill="#fff" stroke="#979797" stroke-width="1.4"/><path d="M4.1 7.9 H11.8" stroke="#000" stroke-width="1.7"/></svg>
<svg style="left:662px;top:762.22px" width="16" height="16" viewBox="0 0 16 16"><rect x="1.8" y="1.7" width="12.4" height="12.4" fill="#fff" stroke="#979797" stroke-width="1.4"/><path d="M4.1 7.9 H11.8" stroke="#000" stroke-width="1.7"/></svg>
<div style="left:670.2px;top:312.59px;width:10px;height:1.2px;background:#8c8c8c"></div>
<div style="left:670.2px;top:582.41px;width:10px;height:1.2px;background:#8c8c8c"></div>
<div style="left:670.2px;top:603.17px;width:10px;height:1.2px;background:#8c8c8c"></div>
<div style="left:670.2px;top:873.00px;width:10px;height:1.2px;background:#8c8c8c"></div>
<div style="left:670.2px;top:893.75px;width:10px;height:1.2px;background:#8c8c8c"></div>
<div style="left:670.2px;top:914.51px;width:10px;height:1.2px;background:#8c8c8c"></div></body></html>
